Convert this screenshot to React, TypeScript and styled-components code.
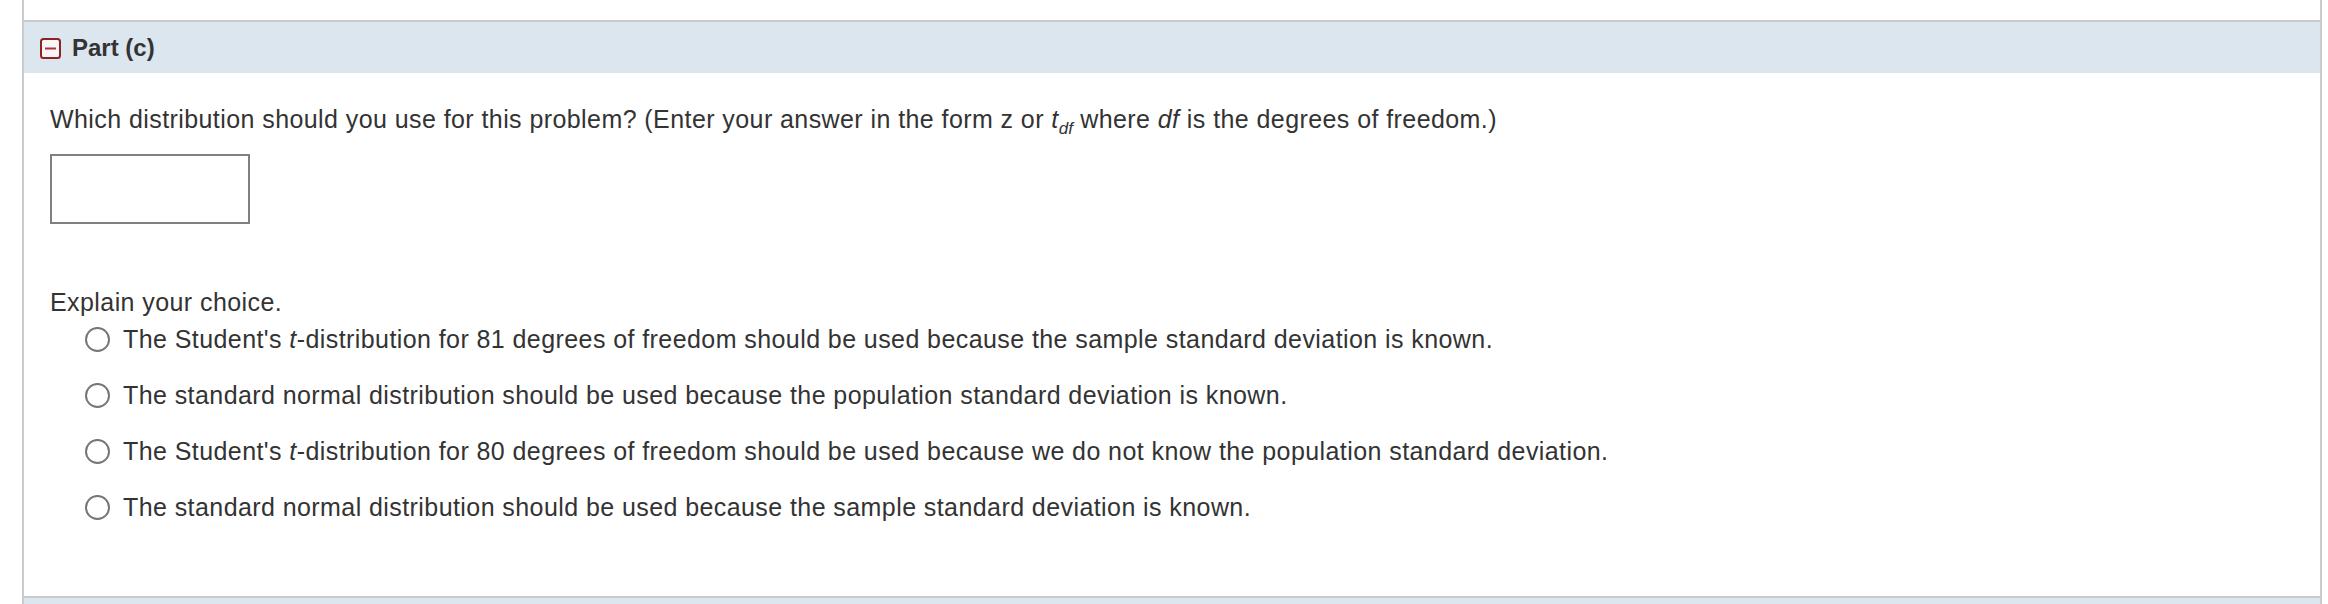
import React from "react";
import styled, { createGlobalStyle } from "styled-components";

const Global = createGlobalStyle`
  html, body { margin: 0; padding: 0; background: #fff; }
  body { font-family: "Liberation Sans", Arial, sans-serif; color: #333; }
`;

const Page = styled.div`
  width: 2328px;
  padding-left: 22px;
  box-sizing: border-box;
`;

const Frame = styled.div`
  width: 2300px;
  box-sizing: border-box;
  border-left: 2px solid #cbcbcb;
  border-right: 2px solid #cbcbcb;
`;

const PrevTail = styled.div`
  height: 20px;
`;

const Section = styled.section`
  border-top: 2px solid #cbcbcb;
`;

const Header = styled.div`
  height: 51px;
  background: #dce6ef;
  display: flex;
  align-items: center;
  gap: 11px;
  padding-left: 16px;
  padding-top: 1px;
  box-sizing: border-box;
`;

const Title = styled.span`
  font-weight: bold;
  font-size: 24px;
  color: #333;
`;

const Body = styled.div`
  padding: 33px 26px 74px 26px;
  display: flex;
  flex-direction: column;
  font-size: 25px;
  letter-spacing: 0.42px;
  line-height: 27.6px;
`;

const Question = styled.div``;

const Sub = styled.sub`
  font-size: 17px;
  font-style: italic;
  vertical-align: -6px;
  line-height: 0;
  letter-spacing: 0;
`;

const Answer = styled.div`
  margin-top: 20px;
  width: 200px;
  height: 70px;
  box-sizing: border-box;
  border: 2px solid #808080;
  background: #fff;
`;

const Explain = styled.div`
  margin-top: 65px;
`;

const Options = styled.div`
  display: flex;
  flex-direction: column;
  gap: 28.4px;
  margin-top: 10px;
  padding-left: 35px;
`;

const Option = styled.label`
  display: flex;
  align-items: center;
  gap: 13px;
  height: 27.6px;
`;

const Radio = styled.span`
  width: 25px;
  height: 25px;
  box-sizing: border-box;
  border-radius: 50%;
  border: 2px solid #767676;
  background: #fff;
  flex: none;
`;

const CollapseIcon = () => (
  <svg width="21" height="21" viewBox="0 0 21 21">
    <rect x="1" y="1" width="19" height="19" rx="2.5" fill="#fbf6f6" stroke="#8c2424" strokeWidth="2" />
    <rect x="5" y="9.5" width="11" height="2" fill="#b03030" />
  </svg>
);

const options: React.ReactNode[] = [
  <>The Student's <i>t</i>-distribution for 81 degrees of freedom should be used because the sample standard deviation is known.</>,
  <>The standard normal distribution should be used because the population standard deviation is known.</>,
  <>The Student's <i>t</i>-distribution for 80 degrees of freedom should be used because we do not know the population standard deviation.</>,
  <>The standard normal distribution should be used because the sample standard deviation is known.</>,
];

export default function App() {
  return (
    <Page>
      <Global />
      <Frame>
        <PrevTail />
        <Section>
          <Header>
            <CollapseIcon />
            <Title>Part (c)</Title>
          </Header>
          <Body>
            <Question>
              Which distribution should you use for this problem? (Enter your answer in the form z or{" "}
              <i>t</i>
              <Sub>df</Sub> where <i>df</i> is the degrees of freedom.)
            </Question>
            <Answer />
            <Explain>Explain your choice.</Explain>
            <Options>
              {options.map((o, i) => (
                <Option key={i}>
                  <Radio />
                  <span>{o}</span>
                </Option>
              ))}
            </Options>
          </Body>
        </Section>
        <Section>
          <Header />
        </Section>
      </Frame>
    </Page>
  );
}
